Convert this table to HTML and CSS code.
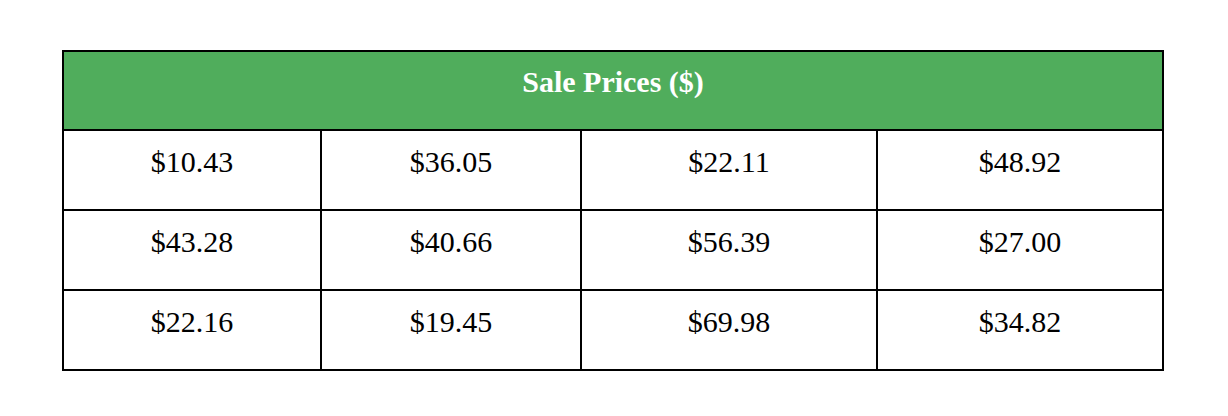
FILE: index.html
```html
<!DOCTYPE html>
<html>
<head>
<meta charset="utf-8">
<link rel="stylesheet" href="styles.css">
</head>
<body>
<table class="prices">
  <colgroup>
    <col class="c1"><col class="c2"><col class="c3"><col class="c4">
  </colgroup>
  <thead>
    <tr><th colspan="4" class="head">Sale Prices ($)</th></tr>
  </thead>
  <tbody>
    <tr><td>$10.43</td><td>$36.05</td><td>$22.11</td><td>$48.92</td></tr>
    <tr><td>$43.28</td><td>$40.66</td><td>$56.39</td><td>$27.00</td></tr>
    <tr><td>$22.16</td><td>$19.45</td><td>$69.98</td><td>$34.82</td></tr>
  </tbody>
</table>
</body>
</html>
```
FILE: styles.css
```css
html, body {
  margin: 0;
  padding: 0;
  background: #ffffff;
}
body {
  padding: 50px 0 0 62px;
  font-family: "Liberation Serif", "Times New Roman", serif;
}
.prices {
  border-collapse: separate;
  border-spacing: 0;
  border: 2px solid #000;
  table-layout: fixed;
  width: 1102px;
  box-sizing: border-box;
}
.c1 { width: 256px; }
.c2 { width: 260px; }
.c3 { width: 296px; }
.c4 { width: 286px; }
.head {
  background: #50ad5c;
  color: #ffffff;
  font-weight: bold;
  font-size: 30px;
  line-height: 34px;
  height: 77px;
  box-sizing: border-box;
  padding: 13px 0 30px;
  text-align: center;
  vertical-align: top;
}
.prices td {
  border-top: 2px solid #000;
  border-left: 2px solid #000;
  font-size: 30px;
  line-height: 34px;
  color: #000;
  height: 80px;
  box-sizing: border-box;
  padding: 14px 0 30px;
  text-align: center;
  vertical-align: top;
}
.prices td:first-child {
  border-left: none;
}
```
